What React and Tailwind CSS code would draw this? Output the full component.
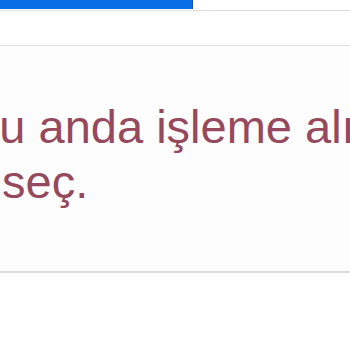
export default function App() {
  return (
    <div className="w-[350px] h-[350px] overflow-hidden bg-white font-['Liberation_Sans',Arial,sans-serif]">
      {/* progress */}
      <div className="h-[11px] border-b border-[#dedede] bg-white">
        <div className="w-[193px] h-[9px] bg-[#0a6fe6] border-r border-[#1d4f9a]" />
      </div>

      <div className="mt-[34px] border-t border-[#e2e2e2] border-b-2 border-b-[#dcdcdc] bg-[#fdfdfd] pt-[53px] pb-[62px] overflow-hidden">
        <p className="text-[47px] leading-[55px] text-[#96495d] whitespace-nowrap">
          <span className="block -ml-[32px]">Şu anda işleme alınan bir iş yok.</span>
          <span className="block ml-[2px]">seç.</span>
        </p>
      </div>
    </div>
  );
}
